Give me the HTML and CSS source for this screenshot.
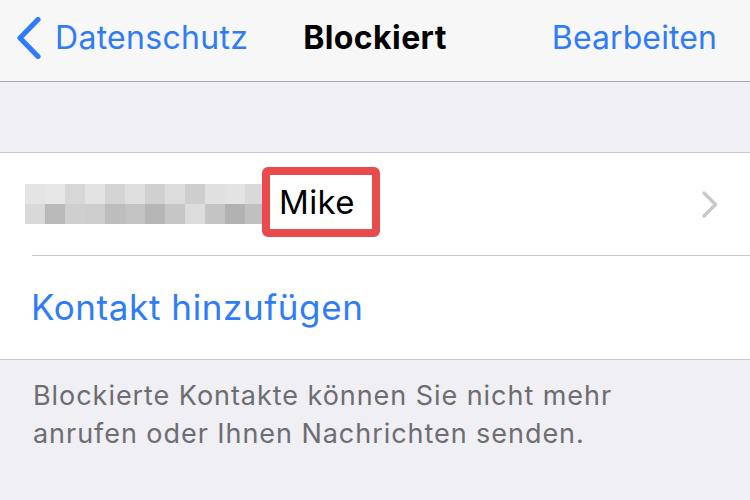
FILE: index.html
```html
<!DOCTYPE html>
<html lang="de">
<head>
<meta charset="utf-8">
<link rel="stylesheet" href="styles.css">
</head>
<body>
<header class="nav">
  <div class="nav-left">
    <svg class="back-icon" width="26" height="42" viewBox="0 0 26 42"><path d="M22 2.5 L4 21 L22 39.5" fill="none" stroke="#2f7cf6" stroke-width="5.2" stroke-linecap="round" stroke-linejoin="round"/></svg>
    <span class="nav-link">Datenschutz</span>
  </div>
  <div class="nav-title">Blockiert</div>
  <div class="nav-right"><span class="nav-link">Bearbeiten</span></div>
</header>
<div class="spacer"></div>
<section class="list">
  <div class="row row-contact">
    <div class="pixels">
      <i style="background:#e4e4e4"></i><i style="background:#e6e6e6"></i><i style="background:#d7d7d7"></i><i style="background:#e3e3e3"></i><i style="background:#d4d4d4"></i><i style="background:#dfdfdf"></i><i style="background:#d0d0d0"></i><i style="background:#dcdcdc"></i><i style="background:#cecece"></i><i style="background:#e0e0e0"></i><i style="background:#e3e3e3"></i><i style="background:#d9d9d9"></i>
      <i style="background:#d9d9d9"></i><i style="background:#b9b9b9"></i><i style="background:#cfcfcf"></i><i style="background:#cdcdcd"></i><i style="background:#bdbdbd"></i><i style="background:#c3c3c3"></i><i style="background:#b6b6b6"></i><i style="background:#c6c6c6"></i><i style="background:#dcdcdc"></i><i style="background:#c4c4c4"></i><i style="background:#b1b1b1"></i><i style="background:#c0c0c0"></i>
    </div>
    <div class="highlight">Mike</div>
    <svg class="chev" width="16" height="27" viewBox="0 0 16 27"><path d="M2 2 L13.5 13.5 L2 25" fill="none" stroke="#c7c7cc" stroke-width="3.2" stroke-linecap="round" stroke-linejoin="round"/></svg>
  </div>
  <div class="row row-add">
    <span class="add-link">Kontakt hinzufügen</span>
  </div>
</section>
<p class="footer">Blockierte Kontakte können Sie nicht mehr<br>anrufen oder Ihnen Nachrichten senden.</p>
</body>
</html>
```
FILE: styles.css
```css
html, body {
  margin: 0;
  padding: 0;
}
body {
  background: #efeff4;
  font-family: Inter, "Noto Sans", sans-serif;
  width: 750px;
  height: 500px;
  overflow: hidden;
}
.nav {
  height: 82px;
  box-sizing: border-box;
  padding-bottom: 6px;
  background: #f7f7f7;
  border-bottom: 1px solid #a7a7aa;
  display: grid;
  grid-template-columns: 1fr auto 1fr;
  align-items: center;
}
.nav-left {
  display: flex;
  align-items: center;
  padding-left: 16px;
}
.back-icon {
  margin-right: 13px;
}
.nav-link {
  color: #2f7cf6;
  font-size: 32px;
  letter-spacing: 0.3px;
}
.nav-title {
  font-size: 32px;
  font-weight: 700;
  letter-spacing: 0.4px;
  color: #000;
}
.nav-right {
  display: flex;
  justify-content: flex-end;
  padding-right: 33px;
}
.nav-right .nav-link {
  letter-spacing: 0.1px;
}
.spacer {
  height: 70px;
}
.list {
  background: #fff;
  border-top: 1px solid #c8c7cc;
  border-bottom: 1px solid #c8c7cc;
}
.row {
  display: flex;
  align-items: center;
}
.row-contact {
  height: 102px;
  padding-left: 25px;
  position: relative;
}
.row-contact::after {
  content: "";
  position: absolute;
  left: 32px;
  right: 0;
  bottom: -1px;
  height: 1px;
  background: #c8c7cc;
}
.pixels {
  display: grid;
  grid-template-columns: repeat(12, 20px);
  grid-template-rows: 20px 20px;
}
.pixels i {
  display: block;
}
.highlight {
  margin-left: -3px;
  margin-top: -4px;
  height: 54px;
  width: 86px;
  padding-left: 9px;
  padding-right: 7px;
  border: 8px solid #e84b4b;
  border-radius: 6px;
  display: flex;
  align-items: center;
  font-size: 33px;
  letter-spacing: 0.4px;
  color: #000;
}
.chev {
  margin-left: auto;
  margin-right: 32px;
}
.row-add {
  height: 103px;
  padding-left: 31px;
  margin-top: 1px;
}
.add-link {
  color: #2f7cf6;
  font-size: 35px;
  letter-spacing: 0.6px;
  margin-top: -2px;
}
.footer {
  margin: 0;
  padding: 17px 0 0 33px;
  font-size: 27px;
  line-height: 38px;
  letter-spacing: 0.95px;
  color: #6d6d72;
}
```
